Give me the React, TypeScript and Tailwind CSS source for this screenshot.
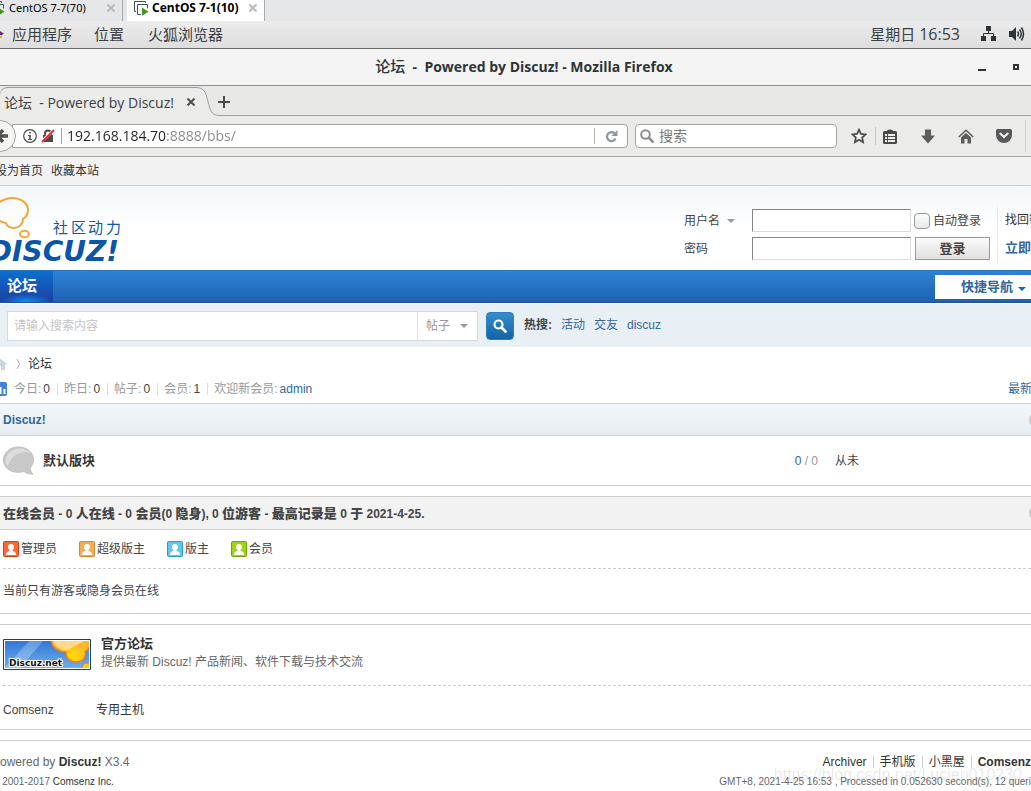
import React from "react";

const UI = "font-['Open_Sans','Noto_Sans_CJK_SC',sans-serif]";
const WEB = "font-['Liberation_Sans','Noto_Sans_CJK_SC',sans-serif]";

function VmIcon() {
  return (
    <svg width="16" height="16" viewBox="0 0 16 16" className="shrink-0">
      <path d="M3 11.500H1.500V1.500h11V3" fill="none" stroke="#3f5260" />
      <path d="M8 14.500H4.500V4.500h10v4" fill="none" stroke="#3f5260" />
      <path d="M9 7.500l6.500 4.200-6.500 4z" fill="#3c9a1c" />
    </svg>
  );
}

function Close({ className }: { className: string }) {
  return (
    <svg width="8" height="8" viewBox="0 0 8 8" className={className}>
      <path d="M.5.5l7 7M7.500.5l-7 7" stroke="currentColor" strokeWidth="2" />
    </svg>
  );
}

function Caret({ className }: { className: string }) {
  return (
    <svg width="8" height="4" viewBox="0 0 8 4" className={className}>
      <path d="M0 0h8L4 4z" fill="currentColor" />
    </svg>
  );
}

function VmTabs() {
  return (
    <div className="flex h-[21px] items-stretch overflow-hidden bg-[#e4e6e8] font-['Noto_Sans',sans-serif] text-[11px] leading-4 text-black">
      <div className="-ml-[11px] flex w-[134px] items-center border-r border-[#a8abae] pb-[6px]">
        <VmIcon />
        <span className="ml-1 flex-1 whitespace-nowrap">CentOS 7-7(70)</span>
        <Close className="mr-[7px] text-[#b9bbbd]" />
      </div>
      <div className="ml-1 flex w-[138px] items-center border-r border-[#a8abae] bg-white pb-[6px] pl-[6px]">
        <VmIcon />
        <span className="ml-[3px] flex-1 whitespace-nowrap text-[12px] font-bold">CentOS 7-1(10)</span>
        <Close className="mr-[7px] text-[#b9bbbd]" />
      </div>
    </div>
  );
}

function GnomePanel() {
  return (
    <div className="flex h-7 items-center border-b border-[#686868] bg-linear-to-b from-[#ececec] to-[#dedede] pb-px text-[15px] text-[#3a4043]">
      <svg width="4" height="12" viewBox="0 0 4 12" className="shrink-0">
        <path d="M0 3l3 2H0z" fill="#932279" />
        <path d="M0 5h4L2 7H0z" fill="#3d3b8e" />
        <path d="M0 8l2-1v3H0z" fill="#efa724" />
      </svg>
      <nav className="ml-2 flex flex-1 gap-x-[22px]">
        <button className="whitespace-nowrap">应用程序</button>
        <button className="whitespace-nowrap">位置</button>
        <button className="ml-[2px] whitespace-nowrap">火狐浏览器</button>
      </nav>
      <span className="whitespace-nowrap">星期日 <span className="text-[16px]">16:53</span></span>
      <svg width="16" height="16" viewBox="0 0 16 16" fill="#2e3436" className="ml-[21px]">
        <path d="M5 0h5v5H5zM0 10h5v5H0zM10 10h5v5h-5z" />
        <path d="M7.500 4v3.500M2.500 11V7.500h10V11" fill="none" stroke="#2e3436" />
      </svg>
      <svg width="16" height="16" viewBox="0 0 16 16" className="ml-3 mr-[6px]">
        <path d="M0 5h3l4-4v14l-4-4H0z" fill="#2e3436" />
        <path d="M8.500 5.500q2 2.500 0 5M10.500 3.500q3.500 4.500 0 9M12.500 1.500q4 6.500 0 13" fill="none" stroke="#2e3436" strokeWidth="1.500" />
      </svg>
    </div>
  );
}

function TitleBar() {
  return (
    <div className="flex h-[37px] items-center border-b border-[#8f908d] bg-[#f4f4f4] pl-[70px] text-[#2e3436]">
      <h1 className="flex-1 whitespace-pre pb-[2px] text-center text-[14px] font-bold">
        <span className="text-[15px] font-medium">论坛</span>
        {"  -  Powered by Discuz! - Mozilla Firefox"}
      </h1>
      <button aria-label="最小化" className="mt-[6px] h-[2px] w-2 bg-[#2e3436]" />
      <button aria-label="最大化" className="ml-[27px] mr-3 size-[6px] border-2 border-[#2e3436]" />
    </div>
  );
}

function TabStrip() {
  return (
    <div className="flex h-[30px] bg-[#e8e8e6] text-[14px] text-[#3a4043]">
      <div className="mt-px flex w-[196px] items-center rounded-tl-lg border-t border-[#9a9b98] bg-[#ebebe9] pl-1">
        <span className="flex-1 whitespace-pre">论坛  - Powered by Discuz!</span>
        <Close className="mr-px text-[#4c4f50]" />
      </div>
      <svg width="24" height="30" viewBox="0 0 24 30" className="shrink-0">
        <path d="M0 1.500C9 1.500 10 8 12 15.500S15 29.500 23 29.500H24V30H0z" fill="#ebebe9" />
        <path d="M0 1.500C9 1.500 10 8 12 15.500S15 29.500 23 29.500H24" fill="none" stroke="#9a9ea3" />
      </svg>
      <div className="flex flex-1 items-center border-b border-[#a2a3a0]">
        <button aria-label="新标签页" className="-ml-[3px] pt-[2px]">
          <svg width="14" height="14" viewBox="0 0 14 14">
            <path d="M7 1v12M1 7h12" stroke="#4a4d4e" strokeWidth="2" />
          </svg>
        </button>
      </div>
    </div>
  );
}

function AddressBar() {
  return (
    <div className="flex h-[41px] items-center border-b border-[#a2a3a0] bg-[#ebebe9] text-[#4a4a4a]">
      <button aria-label="后退" className="z-10 -ml-4 flex size-8 shrink-0 items-center justify-end rounded-full border border-[#a2a3a0] bg-[#f4f4f3] pr-[7px]">
        <svg width="14" height="14" viewBox="0 0 14 14">
          <path d="M9 1L3.500 7 9 13M3 7h11" fill="none" stroke="#4f5252" strokeWidth="3.500" />
        </svg>
      </button>
      <div className="-ml-1 flex h-6 min-w-0 flex-1 items-center rounded-r-sm border border-[#a2a3a0] bg-white pl-[10px]">
        <svg width="14" height="14" viewBox="0 0 14 14" className="shrink-0">
          <circle cx="7" cy="7" r="6.300" fill="none" stroke="#4a4a4a" strokeWidth="1.200" />
          <path d="M6.200 3h1.700v1.600H6.200zM5 6h2.800v4H9v1H5v-1h1.200V7H5z" fill="#4a4a4a" />
        </svg>
        <svg width="14" height="14" viewBox="0 0 14 14" className="ml-1 shrink-0">
          <path d="M2 6h10v7H2z" fill="#4a4a4a" />
          <path d="M4 6V4.500a3 3 0 0 1 6 0V6" fill="none" stroke="#4a4a4a" strokeWidth="2" />
          <path d="M0 13L13 1" stroke="#fff" strokeWidth="3" />
          <path d="M1 13L13 1" stroke="#d92d2d" strokeWidth="2" />
        </svg>
        <span className="ml-[6px] h-4 w-px shrink-0 bg-[#a2a3a0]" />
        <input
          aria-label="地址"
          defaultValue="192.168.184.70:8888/bbs/"
          className="ml-[5px] h-5 min-w-0 flex-1 bg-linear-to-r from-[#222] from-[100px] to-[#888] to-[100px] bg-clip-text pb-px text-[14px] text-transparent outline-none"
        />
        <span className="h-4 w-px shrink-0 bg-[#b4b4b4]" />
        <button aria-label="刷新" className="flex w-8 justify-center">
          <svg width="13" height="13" viewBox="0 0 13 13">
            <path d="M9.500 3.200A4.500 4.500 0 1 0 10.600 8.500" fill="none" stroke="#8a97a8" strokeWidth="2.200" />
            <path d="M12.500 0v6h-6z" fill="#8a97a8" />
          </svg>
        </button>
      </div>
      <div className="ml-[7px] flex h-6 w-[202px] shrink-0 items-center rounded-sm border border-[#a2a3a0] bg-white pl-1">
        <svg width="15" height="15" viewBox="0 0 15 15" className="shrink-0">
          <circle cx="5.500" cy="5.500" r="4.300" fill="none" stroke="#8d8d8d" strokeWidth="2" />
          <path d="M8.500 8.500l5 5" stroke="#8d8d8d" strokeWidth="2.500" />
        </svg>
        <input aria-label="搜索" placeholder="搜索" className="ml-1 h-5 min-w-0 flex-1 pb-[2px] text-[14px] outline-none placeholder:text-[#777]" />
      </div>
      <button aria-label="收藏" className="ml-[14px] shrink-0">
        <svg width="16" height="16" viewBox="0 0 16 16">
          <path d="M8 1.600l1.900 4.300 4.600.5-3.400 3.100 1 4.700L8 11.800l-4.100 2.400 1-4.700L1.500 6.400l4.600-.5z" fill="#fff" fillOpacity=".5" stroke="#4a4a4a" strokeWidth="1.700" />
        </svg>
      </button>
      <span className="ml-2 mr-[7px] h-[18px] w-px shrink-0 bg-[#c4c4c2]" />
      <button aria-label="书签" className="shrink-0">
        <svg width="14" height="15" viewBox="0 0 14 15">
          <rect y="2" width="14" height="13" rx="1.500" fill="#4a4a4a" />
          <path d="M4 3V1.500Q7-.5 10 1.500V3z" fill="#4a4a4a" />
          <path d="M2 5h2v2H2zM5 5h7v2H5zM2 8h2v2H2zM5 8h7v2H5zM2 11h2v2H2zM5 11h7v2H5z" fill="#ededeb" />
        </svg>
      </button>
      <button aria-label="下载" className="ml-[24px] shrink-0">
        <svg width="14" height="15" viewBox="0 0 14 15">
          <path d="M4 .500h6v6h4l-7 8-7-8h4z" fill="#5c5c5c" />
        </svg>
      </button>
      <button aria-label="主页" className="ml-[23px] shrink-0">
        <svg width="16" height="15" viewBox="0 0 16 15">
          <path d="M.8 8L8 1.300 15.200 8" fill="none" stroke="#5c5c5c" strokeWidth="1.500" />
          <path d="M3 8.500L8 4l5 4.500V14.500H9.500V10h-3v4.500H3z" fill="#5c5c5c" />
        </svg>
      </button>
      <button aria-label="Pocket" className="ml-[22px] shrink-0">
        <svg width="16" height="14" viewBox="0 0 16 14">
          <path d="M1.500 0h13Q16 0 16 1.500V6A8 8 0 0 1 0 6V1.500Q0 0 1.500 0z" fill="#585858" />
          <path d="M4.300 4.500L8 8l3.700-3.500" fill="none" stroke="#f2f2f2" strokeWidth="2" strokeLinecap="round" />
        </svg>
      </button>
      <span className="ml-[13px] mr-[5px] h-8 w-px shrink-0 bg-[#d3d3d1]" />
    </div>
  );
}

function Logo() {
  return (
    <a href="#" aria-label="Discuz!" className="mt-[10px] block">
      <svg width="124" height="68" viewBox="0 0 124 68">
        <path
          d="M-6 13C-3 6 5 2 12 2c9 0 16 5 16 12 0 4-2 7-5 9 0 5-4 9-9 9-4 0-7-2-8-5-5-1-9-4-10-7"
          fill="none"
          stroke="#f4a632"
          strokeWidth="2"
        />
        <ellipse cx="24.500" cy="38" rx="4.500" ry="3.200" fill="none" stroke="#f4a632" strokeWidth="2" />
        <text x="53 71 88 106" y="37" fontSize="15" fill="#0f58ab">社区动力</text>
        <text x="119" y="65" fontSize="28" fontWeight="700" fontStyle="italic" fill="#0b55a8" textAnchor="end" fontFamily="DejaVu Sans">
          DISCUZ!
        </text>
      </svg>
    </a>
  );
}

const FIELD = "h-[23px] w-full border border-b-[#ddd] border-l-[#848484] border-r-[#ddd] border-t-[#848484] bg-white px-1 outline-none";

function Header() {
  return (
    <header className="flex h-[84px] justify-between overflow-hidden bg-linear-to-b from-[#f2f7fb] to-white to-50%">
      <Logo />
      <div className="-mr-[26px] mt-[21px] flex h-14">
        <form className="mt-[2px] grid grid-cols-[68px_159px_79px] grid-rows-[23px_23px] gap-y-[5px]">
          <span className="flex items-center">
            <label htmlFor="username">用户名</label>
            <Caret className="ml-[7px] text-[#999]" />
          </span>
          <input id="username" className={FIELD} />
          <label className="ml-[3px] flex items-center gap-[3px] whitespace-nowrap">
            <input type="checkbox" className="size-4 appearance-none rounded border border-[#999] bg-linear-to-b from-white to-[#e6e6e6]" />
            自动登录
          </label>
          <label htmlFor="password" className="flex items-center">密码</label>
          <input id="password" type="password" className={FIELD} />
          <button type="button" className="ml-1 border border-[#999] bg-linear-to-b from-[#fbfbfb] to-[#e0e0e0] text-[13px] leading-4 font-bold">登录</button>
        </form>
        <div className="ml-[7px] flex flex-col gap-y-[10px] border-l border-[#e6e6e6] pl-[7px] pt-1 leading-[18px]">
          <a href="#" className="whitespace-nowrap text-[#333]">找回密码</a>
          <a href="#" className="whitespace-nowrap text-[13px] font-bold text-[#369]">立即注册</a>
        </div>
      </div>
    </header>
  );
}

function NavBar() {
  return (
    <nav className="flex h-[33px] items-center justify-between border-y border-t-[#2373c4] border-b-[#1d549c] bg-linear-to-b from-[#2f82d4] to-[#1f61b1]">
      <a href="#" className="flex h-[31px] w-[53px] items-center bg-[radial-gradient(ellipse_50%_25%_at_50%_100%,#0a92f5_0%,transparent_100%),linear-gradient(#0a6fcb,#1d3fa3)] pb-px pl-[7px] text-[15px] font-bold text-white">论坛</a>
      <button className="flex h-6 w-24 items-center bg-white pl-[26px] text-[13px] font-bold text-[#369]">
        快捷导航
        <Caret className="ml-[5px] mt-1 text-[#0e67b4]" />
      </button>
    </nav>
  );
}

function SearchBar() {
  return (
    <form className="mt-px flex h-[43px] items-center bg-[#e8eff5] pl-[7px]">
      <div className="flex h-[30px] w-[471px] items-stretch border border-[#cfdde2] bg-white">
        <input aria-label="请输入搜索内容" placeholder="请输入搜索内容" className="min-w-0 flex-1 px-[6px] pt-px outline-none placeholder:text-[#c4c4c4]" />
        <div className="flex w-[60px] items-center border-l border-[#dbe3e8] pl-2 pt-px text-[#999]">
          <select aria-label="类型" className="w-[34px] appearance-none text-[#999] outline-none">
            <option>帖子</option>
          </select>
          <Caret className="shrink-0" />
        </div>
      </div>
      <button type="button" aria-label="搜索" className="ml-2 flex size-7 items-center justify-center rounded-sm border border-[#2f7fba] bg-linear-to-b from-[#358dcb] to-[#1164a6]">
        <svg width="14" height="14" viewBox="0 0 14 14">
          <circle cx="5.500" cy="5.500" r="4" fill="none" stroke="#fff" strokeWidth="2.200" />
          <path d="M8.500 8.500l4 4" stroke="#fff" strokeWidth="2.800" strokeLinecap="round" />
        </svg>
      </button>
      <div className="ml-[10px] flex gap-x-[9px] pb-[2px] text-[#369]">
        <strong className="text-[#444]">热搜:</strong>
        <a href="#">活动</a>
        <a href="#">交友</a>
        <a href="#">discuz</a>
      </div>
    </form>
  );
}

const STATS = [
  { label: "今日", value: "0" },
  { label: "昨日", value: "0" },
  { label: "帖子", value: "0" },
  { label: "会员", value: "1" },
];

function Stats() {
  return (
    <div>
      <div className="flex h-[34px] items-center text-[#333]">
        <svg width="8" height="13" viewBox="0 0 8 13" className="shrink-0">
          <path d="M0 .5l8 6H5V12H1V8H0z" fill="#c5d8e6" />
        </svg>
        <svg width="5" height="12" viewBox="0 0 5 12" className="ml-2 mr-[7px]">
          <path d="M1 1l2.500 5L1 11" fill="none" stroke="#aaa" />
        </svg>
        <a href="#">论坛</a>
      </div>
      <div className="flex h-[22px] items-start justify-between overflow-hidden leading-4 text-[#999]">
        <div className="flex items-center">
          <svg width="7" height="14" viewBox="0 0 7 14" className="mr-[7px]">
            <path d="M0 0h5q2 0 2 2v10q0 2-2 2H0z" fill="#3f84d2" />
            <path d="M.500 5v7M4.500 7v5" stroke="#fff" strokeWidth="2" />
          </svg>
          {STATS.map((s) => (
            <span key={s.label} className="flex items-center">
              {s.label}: <em className="ml-[2px] not-italic text-[#444]">{s.value}</em>
              <i className="ml-[7px] mr-[6px] h-3 w-px bg-[#ddd]" />
            </span>
          ))}
          欢迎新会员: <a href="#" className="ml-[2px] text-[#369]">admin</a>
        </div>
        <a href="#" className="-mr-[25px] whitespace-nowrap text-[#369]">最新回复</a>
      </div>
    </div>
  );
}

function Forum() {
  return (
    <section className="border-b border-[#cdcdcd]">
      <div className="flex h-[33px] items-center justify-between overflow-hidden border-y border-[#c2d5e3] bg-linear-to-b from-[#f2f7fb] to-[#e6edf1] pl-[3px]">
        <h2 className="font-bold text-[#369]">Discuz!</h2>
        <span className="-mr-[14px] size-4 rounded-full border-2 border-[#ccc]" />
      </div>
      <table className="h-[49px] w-full table-fixed">
        <tbody>
          <tr>
            <td className="w-[43px] pl-[3px]">
              <svg width="32" height="30" viewBox="0 0 32 30" className="block">
                <path d="M15.500 1C24 1 30.500 6.500 30.500 13.500c0 4-2 7-3.500 8.500.500 3 1.500 5 3 6-4 .5-7-1-9-2.500C9 28.500.500 22.500.500 14 .500 6.500 7 1 15.500 1z" fill="#c8c8c8" stroke="#c0c0c0" />
                <path d="M3 18C1 9 8 2.500 17 2.500 24 3 27.500 7 27.500 7 18 4 8 9 5 20z" fill="#dcdcdc" />
              </svg>
            </td>
            <td><a href="#" className="text-[13px] font-bold text-[#333]">默认版块</a></td>
            <td className="w-[100px] pr-[17px] text-right text-[#999]"><span className="text-[#369]">0</span> / 0</td>
            <td className="w-[196px]">从未</td>
          </tr>
        </tbody>
      </table>
    </section>
  );
}

const ROLES = [
  { name: "管理员", edge: "#d9400d", fill: "#fb6a35" },
  { name: "超级版主", edge: "#d9892b", fill: "#f2ad55" },
  { name: "版主", edge: "#239fcb", fill: "#62c8ea" },
  { name: "会员", edge: "#6fa500", fill: "#9fd414" },
];

function Online() {
  return (
    <section className="mt-[10px] border-y border-[#cdcdcd]">
      <div className="flex h-[33px] items-center justify-between overflow-hidden border-b border-[#c9d6de] bg-[#f2f2f2] pl-[3px]">
        <h2 className="pt-px font-bold whitespace-nowrap [&>b]:text-[13px]">
          <b>在线会员</b> - 0 <b>人在线</b> - 0 <b>会员</b>(0 <b>隐身</b>), 0 <b>位游客</b> - <b>最高记录是</b> 0 <b>于</b> 2021-4-25.
        </h2>
        <span className="-mr-[14px] size-4 rounded-full border-2 border-[#ccc]" />
      </div>
      <div className="ml-[3px]">
        <ul className="flex h-[39px] items-center gap-x-[22px] border-b border-dashed border-[#cdcdcd]">
          {ROLES.map((r) => (
            <li key={r.name} className="flex items-center gap-x-[2px]">
              <svg width="16" height="16" viewBox="0 0 16 16">
                <rect x=".500" y=".500" width="15" height="15" rx="1" fill={r.fill} stroke={r.edge} />
                <path d="M8 3c2 0 3 1.300 3 3s-.8 2.400-1.500 3v1c2.500.5 3.500 1.500 3.500 4H3C3 11.500 4 10.500 6.500 10V9C5.800 8.400 5 7.700 5 6s1-3 3-3z" fill="#fff" />
              </svg>
              {r.name}
            </li>
          ))}
        </ul>
        <p className="flex h-11 items-center">当前只有游客或隐身会员在线</p>
      </div>
    </section>
  );
}

function Links() {
  return (
    <section className="mt-[10px] border-y border-[#cdcdcd] pl-[3px]">
      <div className="flex h-[61px] gap-x-[10px] border-b border-dashed border-[#cdcdcd] pt-[10px]">
        <svg width="88" height="31" viewBox="0 0 88 31" className="mt-1 shrink-0">
          <defs>
            <linearGradient id="sky" x2="0" y2="1"><stop stopColor="#3377d4" /><stop offset="1" stopColor="#6caeee" /></linearGradient>
            <radialGradient id="sun" cy=".7"><stop stopColor="#ffe000" /><stop offset="1" stopColor="#ffb62d" /></radialGradient>
            <clipPath id="frame"><path d="M2 2h84v27H2z" /></clipPath>
          </defs>
          <path d="M.500.500h87v30H.500z" fill="#fff" stroke="#12407c" />
          <g clipPath="url(#frame)">
            <path d="M2 2h84v27H2z" fill="url(#sky)" />
            <path d="M26 2h14L17 29H2z" fill="#fff" fillOpacity=".25" />
            <path d="M48 1c1 8 8 12 15 12 0 7 5 10 10 10 7 0 11-6 9-10 4-2 6-5 6-12z" fill="url(#sun)" stroke="#f07a25" strokeWidth="1.500" />
            <path d="M50 1c1 7 8 10 14 10L83 1z" fill="#ffe9b0" fillOpacity=".7" />
            <circle cx="84" cy="29" r="5" fill="#ffc61d" stroke="#f07a25" />
          </g>
          <text x="6" y="27" fontSize="9" fontWeight="700" fontFamily="DejaVu Sans" fill="#111" stroke="#fff" strokeWidth="2" paintOrder="stroke">Discuz.net</text>
        </svg>
        <div className="leading-[18px]">
          <h3><a href="#" className="text-[13px] font-bold text-[#333]">官方论坛</a></h3>
          <p className="text-[#666]">提供最新 Discuz! 产品新闻、软件下载与技术交流</p>
        </div>
      </div>
      <div className="flex h-[43px] items-center pt-1">
        <a href="#" className="w-[93px]">Comsenz</a>
        <a href="#" className="text-[#333]">专用主机</a>
      </div>
    </section>
  );
}

function Bar() {
  return <i className="mx-[6px] h-3 w-px bg-[#ccc]" />;
}

function Footer() {
  return (
    <footer className="mt-[10px] flex justify-between overflow-hidden border-t border-[#cdcdcd] pb-[2px] pt-3 leading-[18px] text-[#666]">
      <div className="-ml-2">
        <p>Powered by <strong className="text-[#333]">Discuz!</strong> X3.4</p>
        <p className="mt-[2px] text-[10px]">© 2001-2017 <a href="#" className="text-[#333]">Comsenz Inc.</a></p>
      </div>
      <div className="-mr-6 flex flex-col items-end whitespace-nowrap">
        <p className="flex items-center text-[#333]">
          <a href="#">Archiver</a><Bar />
          <a href="#">手机版</a><Bar />
          <a href="#">小黑屋</a><Bar />
          <a href="#" className="font-bold">Comsenz Inc.</a>
        </p>
        <p className="mt-[2px] pr-2 text-[10px]">GMT+8, 2021-4-25 16:53 , Processed in 0.052630 second(s), 12 queries .</p>
      </div>
    </footer>
  );
}

export default function App() {
  return (
    <div className="relative overflow-hidden bg-white">
      <div className={UI}>
        <VmTabs />
        <GnomePanel />
        <TitleBar />
        <TabStrip />
        <AddressBar />
      </div>
      <main className={`${WEB} text-[12px] text-[#444]`}>
        <div className="flex h-[29px] items-center border-b border-[#cdcdcd] bg-[#f2f2f2] text-[#333]">
          <a href="#" className="-ml-[5px]">设为首页</a>
          <a href="#" className="ml-2">收藏本站</a>
        </div>
        <Header />
        <NavBar />
        <SearchBar />
        <Stats />
        <Forum />
        <Online />
        <Links />
        <Footer />
      </main>
      <span className="pointer-events-none absolute bottom-2 right-[9px] font-['Liberation_Sans',sans-serif] text-[16px] leading-5 text-black/10">
        https://blog.csdn.net/Lucien010230
      </span>
    </div>
  );
}
